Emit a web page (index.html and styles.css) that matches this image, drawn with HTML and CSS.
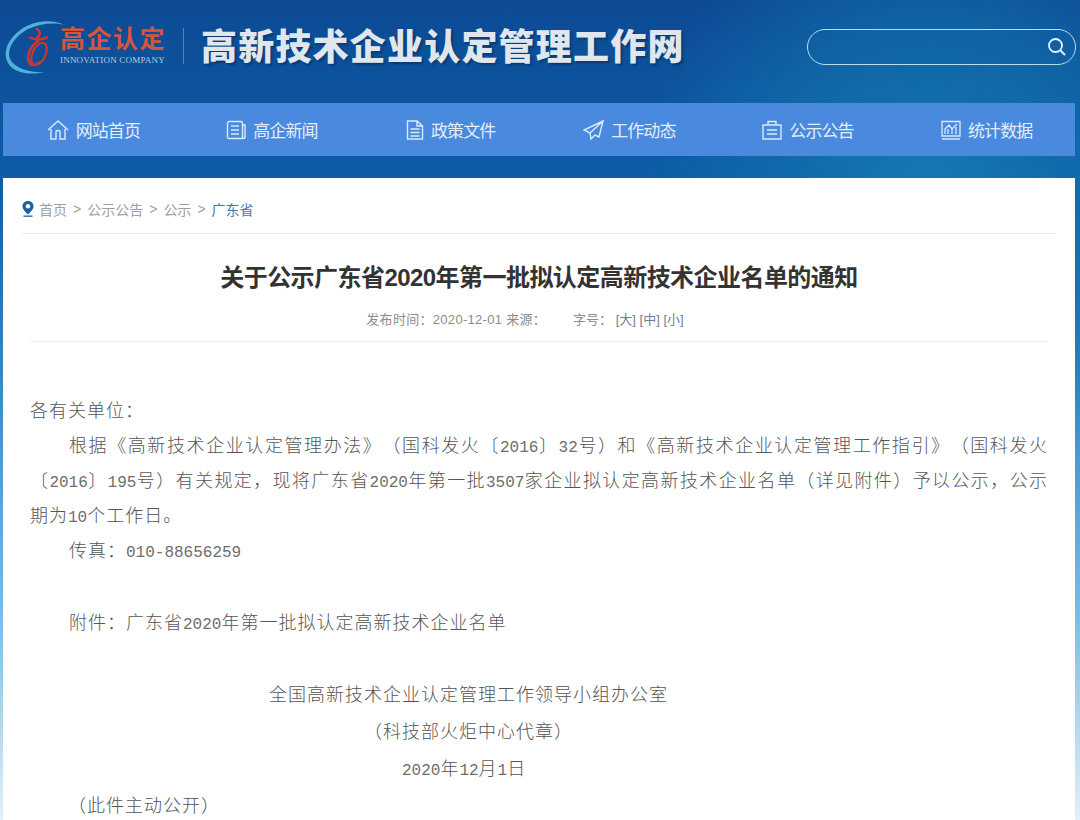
FILE: index.html
```html
<!DOCTYPE html>
<html lang="zh-CN">
<head>
  <meta charset="UTF-8">
  <title>关于公示广东省2020年第一批拟认定高新技术企业名单的通知</title>
  <link rel="stylesheet" href="styles.css">
</head>
<body>
  <header class="header">
    <div class="logo">
      <svg class="logo-mark" width="66" height="60" viewBox="0 0 66 60" fill="none">
        <path d="M61 8C50 2 30 3 16 14C3 24 -2 40 8 50C16 57 30 58 41 55C28 56 12 52 7 42C3 32 12 19 25 12C36 7 50 5 61 8Z" fill="#4fb3d9"/>
        <path d="M33 11C39 15 37 19 33 22M26 20C32 24 39 23 45 20M36 24C28 28 23 38 26 45C28 50 34 48 37 45" stroke="#c8382f" stroke-width="2.600"/>
        <ellipse cx="36" cy="37" rx="6.500" ry="12" transform="rotate(25 36 37)" stroke="#c8382f" stroke-width="2.200"/>
      </svg>
      <div class="logo-text">
        <div class="logo-cn">高企认定</div>
        <div class="logo-en">INNOVATION COMPANY</div>
      </div>
    </div>
    <div class="site-title">高新技术企业认定管理工作网</div>
    <div class="search">
      <svg width="20" height="20" viewBox="0 0 20 20" fill="none" stroke="#e6f2fa" stroke-width="1.800">
        <circle cx="8.500" cy="8.500" r="6.500"/>
        <path d="M13.500 13.500L18 18"/>
      </svg>
    </div>
  </header>

  <nav class="nav">
    <a class="nav-item">
      <svg width="22" height="22" viewBox="0 0 22 22" fill="none" stroke="#d8ecfa" stroke-width="1.400">
        <path d="M1 11L11 2L21 11M4 10V20H9V13C9 11 13 11 13 13V20H18V10"/>
      </svg>
      网站首页
    </a>
    <a class="nav-item">
      <svg width="20" height="20" viewBox="0 0 20 20" fill="none" stroke="#d8ecfa" stroke-width="1.400">
        <path d="M3 1.500H15C16 1.500 16.500 2 16.500 3V18.500H3C2 18.500 1.500 18 1.500 17V3C1.500 2 2 1.500 3 1.500ZM16.500 5H19V17C19 18 18 18.500 16.500 18.500M5 6H13M5 10H13M5 14H13"/>
      </svg>
      高企新闻
    </a>
    <a class="nav-item">
      <svg width="18" height="20" viewBox="0 0 18 20" fill="none" stroke="#d8ecfa" stroke-width="1.400">
        <path d="M1.500 1H11L16.500 6V19H1.500ZM11 1V6H16.500M4.500 9H13.500M4.500 12.500H13.500M4.500 16H13.500"/>
      </svg>
      政策文件
    </a>
    <a class="nav-item">
      <svg width="21" height="20" viewBox="0 0 21 20" fill="none" stroke="#d8ecfa" stroke-width="1.400">
        <path d="M20 1L1 10L7 13L8 19L12 15L16 17ZM20 1L7 13"/>
      </svg>
      工作动态
    </a>
    <a class="nav-item">
      <svg width="20" height="20" viewBox="0 0 20 20" fill="none" stroke="#d8ecfa" stroke-width="1.400">
        <path d="M1 5H19V19H1ZM6 5V1.500H14V5M5 10H15M5 14H15"/>
      </svg>
      公示公告
    </a>
    <a class="nav-item">
      <svg width="20" height="20" viewBox="0 0 20 20" fill="none" stroke="#d8ecfa" stroke-width="1.300">
        <path d="M1 1.500H19V16H1ZM1 19H19M4 14V9L8 5L11 9L16 4M7 14V9M11 14V9M15 14V7"/>
      </svg>
      统计数据
    </a>
  </nav>

  <main class="panel">
    <div class="crumbs">
      <svg width="12" height="16" viewBox="0 0 12 16">
        <path d="M6 0C2.700 0 .5 2.400 .5 5.300C.5 8.500 3.800 11.500 6 13.500C8.200 11.500 11.500 8.500 11.500 5.300C11.500 2.400 9.300 0 6 0Z" fill="#1f62a3"/>
        <circle cx="6" cy="5.300" r="2.200" fill="#fff"/>
        <rect x="1.500" y="14.500" width="9" height="1.300" fill="#1f62a3"/>
      </svg>
      <span>首页</span><span class="sep">&gt;</span><span>公示公告</span><span class="sep">&gt;</span><span>公示</span><span class="sep">&gt;</span><span class="crumb-now">广东省</span>
    </div>

    <h1 class="title">关于公示广东省2020年第一批拟认定高新技术企业名单的通知</h1>
    <div class="meta">
      <span>发布时间：2020-12-01 来源：</span>
      <span class="meta-size">字号： <b>[大]</b> <b>[中]</b> <b>[小]</b></span>
    </div>

    <article class="content">
      <p class="first">各有关单位：</p>
      <p class="indent">根据《高新技术企业认定管理办法》（国科发火〔<span class="num">2016</span>〕<span class="num">32</span>号）和《高新技术企业认定管理工作指引》（国科发火〔<span class="num">2016</span>〕<span class="num">195</span>号）有关规定，现将广东省<span class="num">2020</span>年第一批<span class="num">3507</span>家企业拟认定高新技术企业名单（详见附件）予以公示，公示期为<span class="num">10</span>个工作日。</p>
      <p class="indent">传真：<span class="num">010-88656259</span></p>
      <p class="blank"></p>
      <p class="indent">附件：广东省<span class="num">2020</span>年第一批拟认定高新技术企业名单</p>
      <p class="blank blank-short"></p>
      <p class="sign sign-a">全国高新技术企业认定管理工作领导小组办公室</p>
      <p class="sign sign-b">（科技部火炬中心代章）</p>
      <p class="sign sign-c"><span class="num">2020</span>年<span class="num">12</span>月<span class="num">1</span>日</p>
      <p class="sign sign-d">（此件主动公开）</p>
    </article>
  </main>
</body>
</html>
```

FILE: styles.css
```css
* {
  box-sizing: border-box;
}
html, body {
  height: 820px;
  overflow: hidden;
}
body {
  margin: 0;
  font-family: "Liberation Sans", "Noto Sans CJK SC", sans-serif;
  background:
    radial-gradient(circle at 930px 190px, rgba(24, 130, 185, .75) 0, rgba(18, 112, 172, .6) 170px, rgba(15, 90, 160, 0) 290px),
    linear-gradient(180deg, #0d4a94 0, #0d5ca6 180px, #3f92cf 420px, #7dbde6 620px, #e2f0f9 820px);
}
.header {
  height: 103px;
  display: flex;
  align-items: flex-start;
}
.logo {
  display: flex;
  margin: 17px 0 0 3px;
  width: 180px;
}
.logo-mark {
  flex: none;
  margin-right: -9px;
}
.logo-text {
  margin-top: 9px;
}
.logo-cn {
  font-family: "Liberation Serif", "Noto Sans CJK SC", serif;
  font-size: 25px;
  line-height: 28px;
  font-weight: 700;
  letter-spacing: 1.500px;
  color: #d4553c;
  white-space: nowrap;
}
.logo-en {
  font-family: "Liberation Serif", serif;
  font-size: 9px;
  line-height: 10px;
  margin-top: 1px;
  letter-spacing: .2px;
  color: #b5cbe0;
  white-space: nowrap;
}
.site-title {
  margin: 28px 0 0 0;
  padding-left: 17px;
  width: 625px;
  height: 36px;
  border-left: 1px solid #4f83b8;
  font-family: "Noto Sans CJK SC", sans-serif;
  font-size: 36px;
  line-height: 32px;
  font-weight: 900;
  letter-spacing: 1.200px;
  white-space: nowrap;
  color: #dfe6ee;
  text-shadow: 2px 2px 2px #0b3a73;
}
.search {
  width: 269px;
  height: 36px;
  margin-top: 29px;
  margin-left: -1px;
  border: 1px solid #b8deef;
  border-radius: 18px;
  display: flex;
  align-items: center;
  justify-content: flex-end;
  padding-right: 8px;
}
.nav {
  width: 1072px;
  height: 53px;
  margin-left: 3px;
  background: #4a8ade;
  display: grid;
  grid-template-columns: repeat(6, 1fr);
}
.nav-item {
  display: flex;
  align-items: center;
  justify-content: center;
  gap: 7px;
  padding-left: 2px;
  font-size: 17px;
  letter-spacing: -.9px;
  color: #e3eefa;
}
.panel {
  width: 1072px;
  height: 642px;
  margin: 22px 0 0 3px;
  background: #fff;
  padding: 0 27px;
}
.crumbs {
  height: 56px;
  margin: 0 -8px;
  padding: 7px 0 0 0;
  border-bottom: 1px solid #ececec;
  display: flex;
  align-items: center;
  gap: 6px;
  font-size: 14px;
  color: #a0a0a0;
}
.crumbs svg {
  margin-right: -1px;
}
.crumb-now {
  color: #3a78b0;
}
.title {
  margin: 25px 0 0;
  height: 38px;
  text-align: center;
  font-size: 24px;
  line-height: 38px;
  font-weight: 700;
  letter-spacing: -.55px;
  color: #333;
}
.meta {
  height: 45px;
  padding: 14px 28px 0 0;
  border-bottom: 1px solid #eee;
  display: flex;
  justify-content: center;
  font-size: 13px;
  line-height: 18px;
  letter-spacing: .3px;
  color: #8c8c8c;
}
.meta-size {
  margin-left: 27px;
  letter-spacing: 0;
}
.meta-size b {
  font-weight: 400;
  color: #6f7f92;
}
.content {
  padding-top: 51px;
  font-size: 18px;
  font-weight: 300;
  line-height: 35px;
  letter-spacing: 1px;
  text-spacing-trim: space-all;
  color: #555;
}
.content p {
  margin: 0;
}
.content .first {
  line-height: 36px;
}
.content .indent {
  text-indent: 39px;
  text-align: justify;
}
.num {
  font-family: "Liberation Mono", monospace;
  font-size: 16px;
  line-height: 1;
  letter-spacing: 0;
  color: #6e6e6e;
}
.blank {
  height: 37px;
}
.blank-short {
  height: 36px;
}
.content .sign {
  line-height: 37px;
}
.sign-a {
  padding-left: 239px;
}
.sign-b {
  padding-left: 334px;
}
.sign-c {
  padding-left: 372px;
}
.sign-d {
  padding-left: 38px;
}
```
